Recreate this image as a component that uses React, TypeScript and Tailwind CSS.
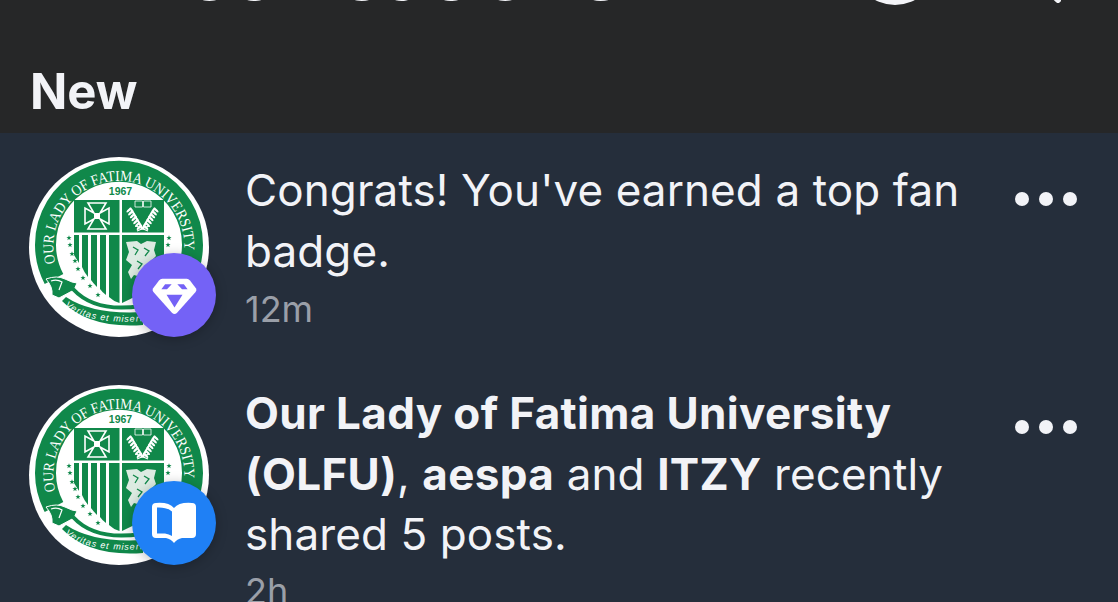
import React from "react";

const G = "#10884a";

function Star({ x, y }: { x: number; y: number }) {
  const pts: string[] = [];
  for (let i = 0; i < 10; i++) {
    const r = i % 2 === 0 ? 2.7 : 1.1;
    const a = (Math.PI / 5) * i - Math.PI / 2;
    pts.push(`${(x + r * Math.cos(a)).toFixed(2)},${(y + r * Math.sin(a)).toFixed(2)}`);
  }
  return <polygon points={pts.join(" ")} fill={G} />;
}

function Seal({ id }: { id: string }) {
  const stars = [
    [40, 81], [41, 88], [43, 97], [46, 104], [49, 112], [54, 121], [61, 129], [69, 138],
    [140, 81], [139, 88],
  ];
  const leaves = [0, 1, 2, 3, 4, 5, 6];
  return (
    <svg viewBox="0 0 180 180" className="w-full h-full block">
      <defs>
        <path id={`${id}-top`} d="M 26.5 106 A 65.5 65.5 0 1 1 155 96" />
        <path id={`${id}-bot`} d="M 36 149 Q 60 168 114 164" />
      </defs>
      <circle cx="90" cy="90" r="90" fill="#ffffff" />
      {/* ring */}
      <path d="M 25 122 A 73.5 73.5 0 1 1 155 122" fill="none" stroke={G} strokeWidth="21" />
      <text fontFamily="'Liberation Serif', serif" fontSize="15" fill="#ffffff">
        <textPath href={`#${id}-top`} textLength="226" lengthAdjust="spacingAndGlyphs">
          OUR LADY OF FATIMA UNIVERSITY
        </textPath>
      </text>
      {/* ribbon fold */}
      <path d="M 17 122 Q 28 118 36 122 Q 44 126 48 126 L 45 133 L 30 141 L 23 138 Q 24 130 17 122 Z" fill={G} stroke="#ffffff" strokeWidth="1" />
      <path d="M 22 124 Q 28 122 33 125 L 30 133" fill="none" stroke="#ffffff" strokeWidth="1.2" />
      {/* bands */}
      <path d="M 44 132 Q 66 156 112 149" fill="none" stroke={G} strokeWidth="4" />
      <path d="M 37 140 Q 64 158 114 155 L 114 168 Q 60 172 33 144 Z" fill={G} />
      <text fontFamily="'Liberation Sans', sans-serif" fontSize="9" fill="#ffffff" fontStyle="italic" letterSpacing="1">
        <textPath href={`#${id}-bot`}>Veritas et misericordia</textPath>
      </text>
      <text x="91.5" y="38" textAnchor="middle" fontFamily="'Liberation Sans', sans-serif" fontWeight="700" fontSize="10.5" fill={G}>
        1967
      </text>
      {/* shield quarters */}
      <rect x="45" y="43" width="45.5" height="32.5" fill={G} />
      <rect x="93" y="43" width="42" height="32.5" fill={G} />
      <path d="M 93 78 H 135 V 108 Q 129 130 93 146 Z" fill={G} />
      <path d="M 45 78 H 50 V 106 L 45 98 Z" fill={G} />
      <path d="M 53 78 H 59 V 120 Q 55 115 53 110 Z" fill={G} />
      <path d="M 62 78 H 68 V 130 Q 64 126 62 123 Z" fill={G} />
      <path d="M 71 78 H 77 V 138 Q 73 135 71 132 Z" fill={G} />
      <path d="M 80 78 H 90.5 V 146 Q 84 144 80 140 Z" fill={G} />
      {/* cross */}
      <path
        d="M 59 46 H 77 L 71 56 L 80 51 V 67 L 71 62 L 77 72 H 59 L 65 62 L 56 67 V 51 L 65 56 Z"
        fill={G}
        stroke="#ffffff"
        strokeWidth="1.6"
      />
      <path d="M 65 56 H 71 V 62 H 65 Z" fill="#ffffff" />
      {/* book */}
      <path d="M 106 44 H 113.5 V 50 H 106 Z M 114.5 44 H 122 V 50 H 114.5 Z" fill="none" stroke="#ffffff" strokeWidth="0.8" />
      {/* wreath */}
      {leaves.map((i) => {
        const lx = 100 + i * 1.7;
        const rx = 127 - i * 1.7;
        const y = 53 + i * 2.9;
        return (
          <g key={i} fill="#ffffff">
            <ellipse cx={lx} cy={y} rx="3.3" ry="1.2" transform={`rotate(${-45} ${lx} ${y})`} />
            <ellipse cx={lx + 2.6} cy={y} rx="3" ry="1.1" transform={`rotate(${50} ${lx + 2.6} ${y})`} />
            <ellipse cx={rx} cy={y} rx="3.3" ry="1.2" transform={`rotate(${45} ${rx} ${y})`} />
            <ellipse cx={rx - 2.6} cy={y} rx="3" ry="1.1" transform={`rotate(${-50} ${rx - 2.6} ${y})`} />
          </g>
        );
      })}
      <path d="M 108 74 L 120 69 M 119 74 L 107 69" stroke="#ffffff" strokeWidth="1.1" />
      {/* lion */}
      <path
        d="M 97 85 L 108 84 L 112 87 L 118 84 L 127 85 L 125 93 L 127 99 L 122 104 L 124 110 L 118 114 L 112 120 L 105 118 L 102 122 L 99 115 L 103 108 L 97 103 L 100 95 Z"
        fill="#dcebe2"
      />
      <path d="M 104 90 L 109 93 L 106 98 M 115 91 L 120 94 L 116 99 M 108 104 L 113 107 L 109 112" fill="none" stroke={G} strokeWidth="1.3" />
      {stars.map(([x, y], i) => (
        <Star key={i} x={x} y={y} />
      ))}
    </svg>
  );
}

function Badge({ kind }: { kind: "gem" | "book" }) {
  return (
    <div
      className={`absolute left-[103px] top-[96px] w-[84px] h-[84px] rounded-full flex items-center justify-center shadow-[0_2px_12px_rgba(0,0,0,0.25)] ${
        kind === "gem" ? "bg-[#7462f6]" : "bg-[#1f80f5]"
      }`}
    >
      {kind === "gem" ? (
        <svg viewBox="0 0 48 44" preserveAspectRatio="none" className="w-[45px] h-[37px] mt-[2px]">
          <path
            d="M 11 1 H 37 Q 39 1 40.5 3 L 47 12.5 Q 48 14.5 46.5 16.5 L 26.5 41.5 Q 24 44 21.5 41.5 L 1.5 16.5 Q 0 14.5 1 12.5 L 7.5 3 Q 9 1 11 1 Z"
            fill="#ffffff"
          />
          <path d="M 14 7.5 H 21 L 16 13.5 H 10 Z M 27 7.5 H 34 L 38 13.5 H 32 Z" fill="#7462f6" />
          <path d="M 15.5 20 H 32.5 L 24 35 Z" fill="#7462f6" />
        </svg>
      ) : (
        <svg viewBox="0 0 46 42" className="w-[46px] h-[42px]">
          <path
            d="M 5 1 Q 18 0 23 6 Q 28 0 41 1 Q 45 1 45 5 V 32 Q 45 36 41 36 H 31 Q 26 37 23 41 Q 20 37 15 36 H 5 Q 1 36 1 32 V 5 Q 1 1 5 1 Z"
            fill="#ffffff"
          />
          <path d="M 6 5.5 Q 16 5 21 9.5 V 34 Q 18 32 14 31.5 H 6 Z" fill="#1f80f5" />
        </svg>
      )}
    </div>
  );
}

function Row({
  id,
  badge,
  time,
  textClass,
  timeClass,
  children,
}: {
  id: string;
  badge: "gem" | "book";
  time: string;
  textClass: string;
  timeClass: string;
  children: React.ReactNode;
}) {
  return (
    <div className="flex h-[228px] pt-[24px] pl-[29px] pr-[41px]">
      <div className="relative w-[180px] h-[180px] shrink-0">
        <Seal id={id} />
        <Badge kind={badge} />
      </div>
      <div className={`ml-[36px] w-[743px] shrink-0 ${textClass}`}>
        <div className="text-[44px] leading-[60.5px] text-[#f2f3f7] tracking-[0.1px]">{children}</div>
        <div className={`text-[36px] leading-[40px] text-[#9a9fa8] ${timeClass}`}>{time}</div>
      </div>
      <div className="ml-auto flex gap-[10px] mt-[35px] h-[14px]">
        <div className="w-[14px] h-[14px] rounded-full bg-[#f2f3f7]" />
        <div className="w-[14px] h-[14px] rounded-full bg-[#f2f3f7]" />
        <div className="w-[14px] h-[14px] rounded-full bg-[#f2f3f7]" />
      </div>
    </div>
  );
}

export default function App() {
  const B = "font-bold tracking-[0.35px]";
  return (
    <div className="w-[1118px] h-[602px] overflow-hidden bg-[#252e3b] font-['Inter','Liberation_Sans',sans-serif]">
      <header className="h-[133px] bg-[#262728] overflow-hidden">
        <div className="flex items-end h-[60px] -mt-[57px] pl-[125px]">
          <h1 className="text-[79px] leading-none font-bold text-[#f2f3f7] whitespace-nowrap mb-[-8px]">Notifications</h1>
          <div className="ml-auto flex items-end pr-[57px]">
            <div className="w-[84px] h-[84px] rounded-full bg-[#f2f3f7] -mb-[2px]" />
            <svg viewBox="0 0 60 60" className="w-[60px] h-[60px] ml-[64px]">
              <circle cx="24" cy="24" r="22" fill="none" stroke="#f2f3f7" strokeWidth="6" />
              <path d="M 40 40 L 57 57" stroke="#f2f3f7" strokeWidth="6" strokeLinecap="round" />
            </svg>
          </div>
        </div>
        <div className="pl-[30px] mt-[59px] text-[49px] leading-[60px] font-bold text-[#f2f3f7]">New</div>
      </header>
      <Row id="a" badge="gem" time="12m" textClass="mt-[3px]" timeClass="mt-[8px]">
        Congrats! You've earned a top fan badge.
      </Row>
      <Row id="b" badge="book" time="2h" textClass="-mt-[2px]" timeClass="mt-[6px]">
        <b className={B}>Our Lady of Fatima University (OLFU)</b>, <b className={B}>aespa</b> and{" "}
        <b className={B}>ITZY</b> recently shared 5 posts.
      </Row>
    </div>
  );
}
